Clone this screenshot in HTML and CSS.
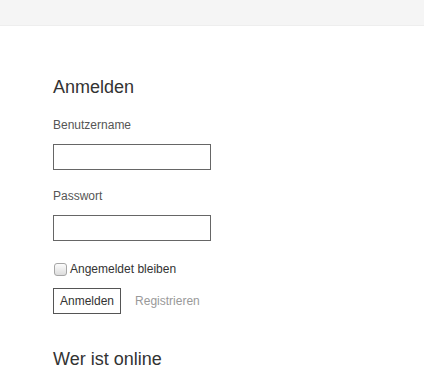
FILE: index.html
```html
<!DOCTYPE html>
<html lang="de">
<head>
    <meta charset="utf-8">
    <title>Anmelden</title>
    <link rel="stylesheet" href="styles.css">
</head>
<body>

    <div class="top-bar"></div>

    <div class="content">
        <h2>Anmelden</h2>

        <form class="login-form" method="post" onsubmit="return false">
            <div class="field">
                <label for="username">Benutzername</label>
                <input type="text" id="username" name="username" class="inp">
            </div>

            <div class="field">
                <label for="password">Passwort</label>
                <input type="password" id="password" name="password" class="inp">
            </div>

            <div class="remember">
                <input type="checkbox" id="remember" name="remember">
                <label for="remember">Angemeldet bleiben</label>
            </div>

            <div class="actions">
                <button type="submit" class="btn">Anmelden</button>
                <a href="#" class="register">Registrieren</a>
            </div>
        </form>

        <h2 class="online">Wer ist online</h2>
    </div>

</body>
</html>
```

FILE: styles.css
```css
body {
    margin: 0;
    font-family: "Liberation Sans", Arial, sans-serif;
    color: #333;
    background: #fff;
}

.top-bar {
    height: 25px;
    background: #f5f5f5;
    border-bottom: 1px solid #eeeeee;
}

.content {
    padding: 51px 53px 0;
}

h2 {
    margin: 0;
    font-size: 18px;
    font-weight: normal;
    line-height: 20px;
    color: #333;
}

.login-form {
    margin-top: 20px;
}

.field {
    margin-bottom: 18px;
}

.field label {
    display: block;
    font-size: 12px;
    line-height: 17px;
    color: #555;
    margin-bottom: 10px;
}

.inp {
    display: block;
    box-sizing: border-box;
    width: 158px;
    height: 26px;
    margin: 0;
    padding: 3px 5px;
    border: 1px solid #666;
    border-radius: 0;
    font-family: inherit;
    font-size: 12px;
}

.remember {
    display: flex;
    align-items: center;
    margin-top: 21px;
    font-size: 12px;
    color: #333;
}

.remember input {
    -webkit-appearance: none;
    appearance: none;
    box-sizing: border-box;
    width: 13px;
    height: 13px;
    margin: 0 3px 0 1px;
    border: 1px solid #a6a6a6;
    border-radius: 3px;
    background: linear-gradient(to bottom, #fcfcfc, #dcdcdc);
}

.actions {
    display: flex;
    align-items: center;
    margin-top: 12px;
}

.btn {
    box-sizing: border-box;
    height: 26px;
    padding: 0 6px;
    background: #fff;
    border: 1px solid #555;
    border-radius: 0;
    font-family: inherit;
    font-size: 12px;
    color: #333;
    cursor: pointer;
}

.register {
    margin-left: 14px;
    font-size: 12px;
    color: #999;
    text-decoration: none;
}

.online {
    margin-top: 35px;
}
```
